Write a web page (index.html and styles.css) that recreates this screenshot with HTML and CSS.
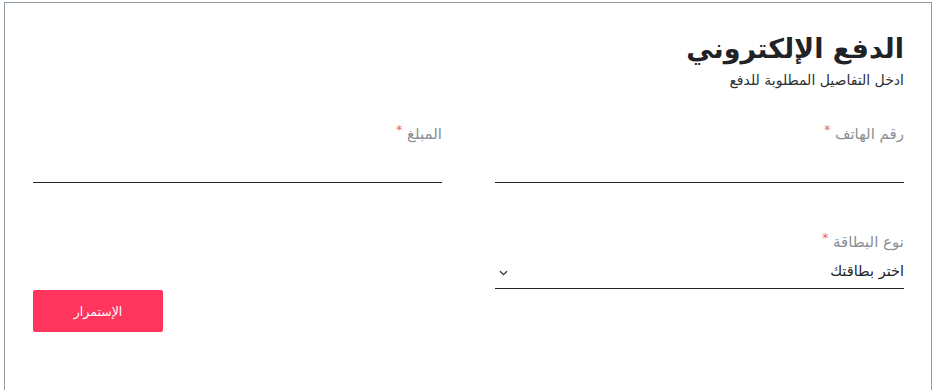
FILE: index.html
```html
<!DOCTYPE html>
<html lang="ar" dir="rtl">
<head>
<meta charset="utf-8">
<title>الدفع الإلكتروني</title>
<link rel="stylesheet" href="styles.css">
</head>
<body>
<div class="card">
  <header class="head">
    <h1 class="title">الدفع الإلكتروني</h1>
    <p class="subtitle">ادخل التفاصيل المطلوبة للدفع</p>
  </header>
  <form class="form">
    <div class="field field-phone">
      <label class="label">رقم الهاتف <span class="req">*</span></label>
      <div class="input"></div>
    </div>
    <div class="field field-amount">
      <label class="label">المبلغ <span class="req">*</span></label>
      <div class="input"></div>
    </div>
    <div class="field field-card">
      <label class="label">نوع البطاقة <span class="req">*</span></label>
      <div class="select">
        <span class="select-text">اختر بطاقتك</span>
        <svg class="chev" width="9" height="6" viewBox="0 0 9 6"><path d="M1 1.2 L4.5 4.6 L8 1.2" fill="none" stroke="#333" stroke-width="1.3"/></svg>
      </div>
    </div>
    <div class="actions">
      <button type="button" class="btn">الإستمرار</button>
    </div>
  </form>
</div>
</body>
</html>
```
FILE: styles.css
```css
* { box-sizing: border-box; }
html, body { margin: 0; padding: 0; background: #fff; }
body {
  font-family: "DejaVu Sans", "Noto Sans", sans-serif;
  color: #212529;
  padding: 2px 4px 0 4px;
}
.card {
  border: 1px solid #8e9aa3;
  border-bottom: none;
  height: 400px;
  padding: 28px 27px 0 28px;
}
.head { text-align: right; }
.title {
  margin: 0;
  font-size: 27px;
  font-weight: bold;
  line-height: 36px;
  color: #1f2327;
}
.subtitle {
  margin: 5px 0 0;
  font-size: 14px;
  line-height: 16px;
  color: #2b2f33;
}
.form {
  margin-top: 36px;
  display: grid;
  grid-template-columns: 409px 409px;
  column-gap: 53px;
  row-gap: 0;
}
.field { display: flex; flex-direction: column; }
.label {
  font-size: 15px;
  line-height: 20px;
  color: #8a8f94;
}
.req { color: #f0577a; font-size: 12px; vertical-align: top; position: relative; top: -4px; }
.input {
  height: 28px;
  margin-top: 11px;
  border-bottom: 1px solid #212529;
}
.field-card { margin-top: 49px; }
.select {
  margin-top: 8px;
  height: 29px;
  border-bottom: 1px solid #212529;
  display: flex;
  align-items: center;
  justify-content: space-between;
  padding: 0 0 6px 4px;
}
.select-text { font-size: 14.5px; color: #1f2327; }
.chev { margin-top: 4px; }
.actions {
  grid-column: 2;
  grid-row: 3;
  padding-top: 1px;
  display: flex;
  justify-content: flex-end;
}
.btn {
  width: 130px;
  height: 42px;
  border: none;
  border-radius: 2px;
  background: #ff355e;
  color: #fff;
  font-family: "DejaVu Sans", sans-serif;
  font-size: 12.5px;
  cursor: pointer;
}
```
